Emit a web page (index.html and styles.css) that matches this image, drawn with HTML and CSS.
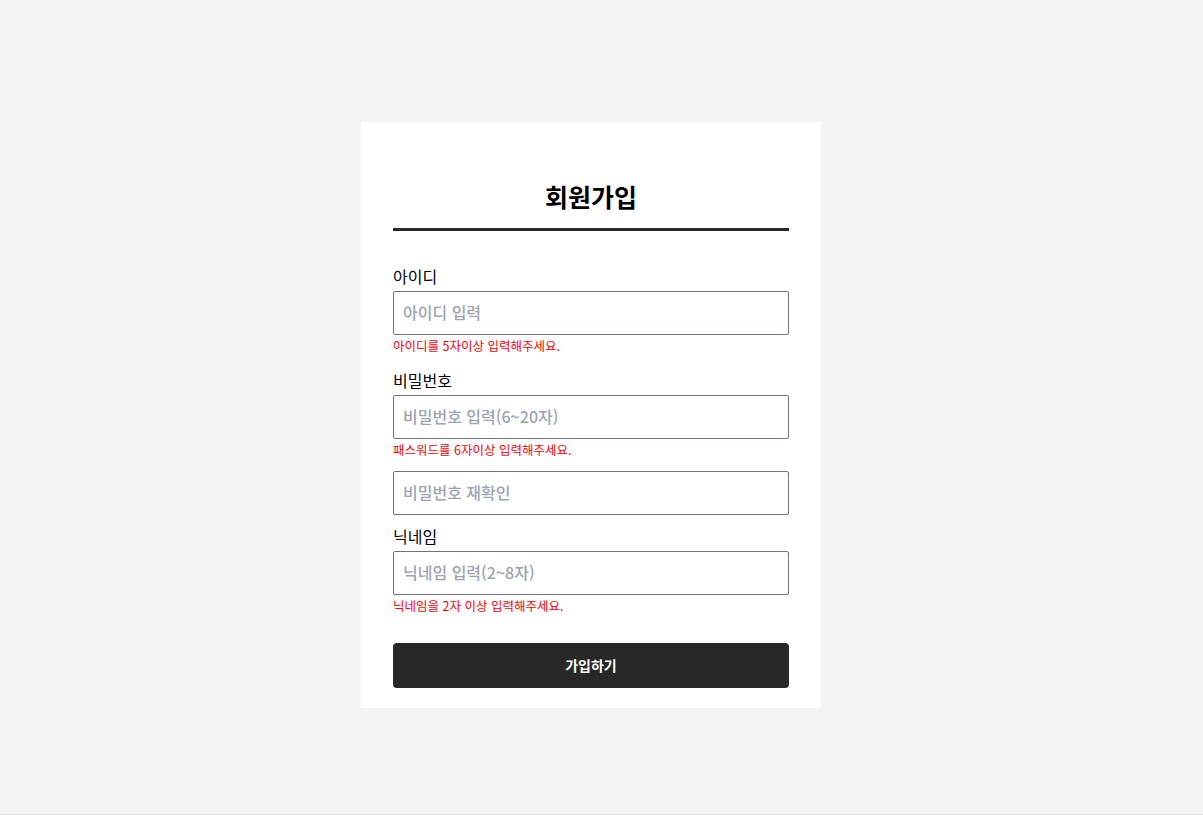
FILE: index.html
```html
<!DOCTYPE html>
<html lang="ko">
  <head>
    <meta charset="utf-8">
    <title>회원가입</title>
    <link rel="stylesheet" href="styles.css">
  </head>
  <body>
    <div class="page">
      <form class="signup-card">
        <h1 class="signup-title">회원가입</h1>

        <div class="field field-first">
          <label class="field-label" for="user-id">아이디</label>
          <input class="field-input" id="user-id" type="text" placeholder="아이디 입력">
          <p class="field-error">아이디를 5자이상 입력해주세요.</p>
        </div>

        <div class="field">
          <label class="field-label" for="user-pw">비밀번호</label>
          <input class="field-input" id="user-pw" type="password" placeholder="비밀번호 입력(6~20자)">
          <p class="field-error">패스워드를 6자이상 입력해주세요.</p>
        </div>

        <div class="field field-confirm">
          <input class="field-input" id="user-pw-check" type="password" placeholder="비밀번호 재확인">
        </div>

        <div class="field field-nick">
          <label class="field-label" for="user-nick">닉네임</label>
          <input class="field-input" id="user-nick" type="text" placeholder="닉네임 입력(2~8자)">
          <p class="field-error">닉네임을 2자 이상 입력해주세요.</p>
        </div>

        <button class="signup-button" type="button">가입하기</button>
      </form>
    </div>
  </body>
</html>
```

FILE: styles.css
```css
* {
  box-sizing: border-box;
}

body {
  margin: 0;
  background-color: #f4f4f4;
  font-family: "Noto Sans CJK KR", "Noto Sans", sans-serif;
  color: #000000;
}

.page {
  min-height: 815px;
  border-bottom: 1px solid #e2e2e2;
  display: flex;
  justify-content: center;
  align-items: flex-start;
  padding: 122px 21px 0 0;
}

.signup-card {
  width: 460px;
  background-color: #ffffff;
  padding: 59px 32px 20px 32px;
  display: flex;
  flex-direction: column;
}

.signup-title {
  margin: 0;
  font-size: 25px;
  line-height: 31px;
  font-weight: 700;
  text-align: center;
  padding-bottom: 16px;
  border-bottom: 3px solid #282828;
}

.field {
  display: flex;
  flex-direction: column;
  margin-top: 14px;
}

.field-first {
  margin-top: 34px;
}

.field-confirm {
  margin-top: 12px;
}

.field-nick {
  margin-top: 10px;
}

.field-label {
  font-size: 16px;
  line-height: 22px;
  margin-bottom: 4px;
}

.field-input {
  width: 100%;
  height: 44px;
  border: 1px solid #6b7280;
  border-radius: 2px;
  padding: 0 9px 3px 9px;
  font-family: inherit;
  font-size: 16px;
  font-weight: 500;
  color: #000000;
  outline: none;
}

.field-input::placeholder {
  color: #9ca3af;
}

.field-error {
  margin: 2px 0 0 0;
  font-size: 12.5px;
  line-height: 18px;
  color: #ff0000;
}

.signup-button {
  margin-top: 28px;
  height: 45px;
  border: none;
  border-radius: 4px;
  background-color: #282828;
  color: #ffffff;
  font-family: inherit;
  font-size: 14px;
  font-weight: 700;
  padding-bottom: 2px;
  cursor: pointer;
}
```
